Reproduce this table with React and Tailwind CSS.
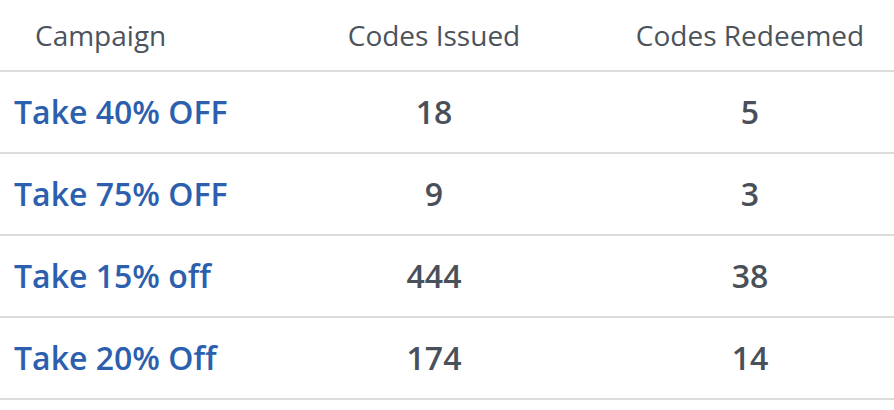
export default function App() {
  const rows = [
    ["Take 40% OFF", "18", "5"],
    ["Take 75% OFF", "9", "3"],
    ["Take 15% off", "444", "38"],
    ["Take 20% Off", "174", "14"],
  ];
  return (
    <div className="w-[894px] h-[410px] bg-white" style={{ fontFamily: '"Open Sans", sans-serif' }}>
      <div className="grid grid-cols-[268px_332px_294px] h-[72px] items-center border-b-2 border-[#dcdcdc] text-[28px] text-[#4b535c]">
        <div className="pl-[35px]">Campaign</div>
        <div className="text-center">Codes Issued</div>
        <div className="text-center pl-[6px]">Codes Redeemed</div>
      </div>
      {rows.map((r) => (
        <div key={r[0]} className="grid grid-cols-[268px_332px_294px] h-[82px] items-center border-b-2 border-[#dcdcdc] text-[32px] font-semibold">
          <div className="pl-[14px] text-[#2c5fae]">{r[0]}</div>
          <div className="text-center text-[#4a5059]">{r[1]}</div>
          <div className="text-center pl-[6px] text-[#4a5059]">{r[2]}</div>
        </div>
      ))}
    </div>
  );
}
